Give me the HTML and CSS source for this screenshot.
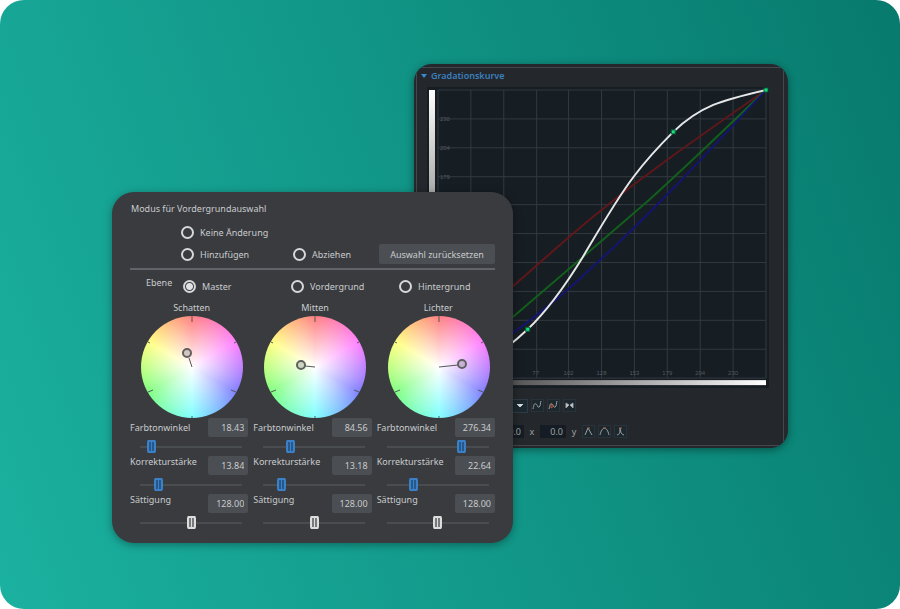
FILE: index.html
```html
<!DOCTYPE html>
<html lang="de">
<head>
  <meta charset="utf-8">
  <title>Farbkorrektur</title>
  <link rel="stylesheet" href="styles.css">
</head>
<body>
  <main class="stage">
    <div class="panels">

      <section class="curve-panel">
        <div class="curve-frame">
          <h2 class="curve-title">Gradationskurve</h2>
          <svg class="curve-plot" viewBox="426 87 343 302">
            <defs>
              <linearGradient id="rampV" x1="0" y1="0" x2="0" y2="1">
                <stop offset="0" stop-color="#fff"/>
                <stop offset="1" stop-color="#111"/>
              </linearGradient>
              <linearGradient id="rampH">
                <stop offset="0" stop-color="#222"/>
                <stop offset="1" stop-color="#fff"/>
              </linearGradient>
            </defs>
            <rect x="426" y="87" width="343" height="302" fill="#161d23"/>
            <rect x="428" y="90" width="6" height="289" fill="url(#rampV)"/>
            <rect x="437" y="381" width="329" height="5" fill="url(#rampH)"/>
            <path class="grid-lines" d="M437 90V379M470 90V379M503 90V379M536 90V379M568 90V379M601 90V379M634 90V379M667 90V379M700 90V379M733 90V379M766 90V379M437 90H766M437 119H766M437 148H766M437 177H766M437 205H766M437 234H766M437 263H766M437 292H766M437 321H766M437 350H766M437 379H766"/>
            <g class="scale">
              <text x="439" y="121">230</text>
              <text x="439" y="150">204</text>
              <text x="439" y="179">179</text>
            </g>
            <g class="scale scale-x">
              <text x="535" y="376">77</text>
              <text x="568" y="376">102</text>
              <text x="601" y="376">128</text>
              <text x="634" y="376">153</text>
              <text x="667" y="376">179</text>
              <text x="700" y="376">204</text>
              <text x="733" y="376">230</text>
            </g>
            <path class="curve red" d="M437 356C480 315 496 301 513 286C560 245 600 208 667 160C700 136 733 113 766 90"/>
            <path class="curve green" d="M437 379L513 317C560 277 600 242 649 200C688 165 727 127 766 90"/>
            <path class="curve blue" d="M437 379C460 370 490 349 513 333C544 311 570 289 600 260C655 210 710 150 766 90"/>
            <path class="curve white" d="M437 379C470 374 495 360 527 330C547 311 566 284 582 258C598 231 617 198 634 176C646 160 660 145 673 132C700 106 722 100 766 90"/>
            <g class="knots">
              <rect x="525" y="328" width="4" height="4"/>
              <rect x="671" y="130" width="4" height="4"/>
              <rect x="764" y="88" width="4" height="4"/>
            </g>
          </svg>

          <div class="curve-tools">
            <select class="channel" aria-label="Kanal"><option></option></select>
            <button class="tool" aria-label="Kurve">
              <svg viewBox="0 0 11 11"><path d="M1 9C2 5 2 3 4 4S5 8 7 7S8 3 9 1"/></svg>
            </button>
            <button class="tool" aria-label="Kurve anpassen">
              <svg viewBox="0 0 11 11"><path d="M1 9C2 5 2 3 4 4S5 8 7 7S8 3 9 1"/><path class="hot" d="M3 4L6 6L3 8Z"/></svg>
            </button>
            <button class="tool" aria-label="Spiegeln">
              <svg viewBox="0 0 11 11"><path class="solid" d="M2 3L5 5L2 8ZM9 3L6 5L9 8Z"/></svg>
            </button>
          </div>
          <div class="curve-tools coords">
            <input class="coord" id="cx" type="text" value="0.0"><label for="cx">x</label>
            <input class="coord" id="cy" type="text" value="0.0"><label for="cy">y</label>
            <button class="tool" aria-label="Ecke">
              <svg viewBox="0 0 11 11"><path d="M2 9L5 2L9 9"/><path class="hot" d="M4 2h3"/></svg>
            </button>
            <button class="tool" aria-label="Glatt">
              <svg viewBox="0 0 11 11"><path d="M1 9C3 0 8 0 10 9"/><path class="hot" d="M4 2h3"/></svg>
            </button>
            <button class="tool" aria-label="Spitze">
              <svg viewBox="0 0 11 11"><path d="M2 9C5 8 5 7 5 2C6 7 6 8 9 9"/><path class="hot" d="M4 2h3"/></svg>
            </button>
          </div>
        </div>
      </section>

      <section class="wheel-panel">
        <h2 class="mode-title">Modus für Vordergrundauswahl</h2>
        <div class="modes">
          <label class="radio keep"><input type="radio" name="mode">Keine Änderung</label>
          <label class="radio"><input type="radio" name="mode">Hinzufügen</label>
          <label class="radio"><input type="radio" name="mode">Abziehen</label>
          <button class="reset">Auswahl zurücksetzen</button>
        </div>
        <div class="layers">
          <span class="layers-title">Ebene</span>
          <label class="radio"><input type="radio" name="layer" checked>Master</label>
          <label class="radio"><input type="radio" name="layer">Vordergrund</label>
          <label class="radio"><input type="radio" name="layer">Hintergrund</label>
        </div>

        <div class="columns">
          <section class="column">
            <h3>Schatten</h3>
            <svg class="wheel" viewBox="-51 -51 102 102">
              <path class="ticks" d="M0 -51V-45M0 51V49M44 -25L42 -24M44 25L39 23M-44 25L-39 23M-44 -25L-42 -24"/>
              <path class="hand" d="M0 0L-3 -9"/>
              <circle class="pin" cx="-5" cy="-14" r="4"/>
            </svg>
            <div class="setting first">
              <label for="s-hue">Farbtonwinkel</label>
              <input class="value" id="s-hue" type="text" value="18.43">
              <input class="slider" type="range" max="360" step="0.01" value="18.43" aria-label="Farbtonwinkel">
            </div>
            <div class="setting">
              <label for="s-strength">Korrekturstärke</label>
              <input class="value" id="s-strength" type="text" value="13.84">
              <input class="slider" type="range" max="100" step="0.01" value="13.84" aria-label="Korrekturstärke">
            </div>
            <div class="setting">
              <label for="s-sat">Sättigung</label>
              <input class="value" id="s-sat" type="text" value="128.00">
              <input class="slider neutral" type="range" max="256" value="128" aria-label="Sättigung">
            </div>
          </section>

          <section class="column">
            <h3>Mitten</h3>
            <svg class="wheel" viewBox="-51 -51 102 102">
              <path class="ticks" d="M0 -51V-45M0 51V49M44 -25L42 -24M44 25L39 23M-44 25L-39 23M-44 -25L-42 -24"/>
              <path class="hand" d="M0 0L-10 -1"/>
              <circle class="pin" cx="-14" cy="-2" r="4"/>
            </svg>
            <div class="setting first">
              <label for="m-hue">Farbtonwinkel</label>
              <input class="value" id="m-hue" type="text" value="84.56">
              <input class="slider" type="range" max="360" step="0.01" value="84.56" aria-label="Farbtonwinkel">
            </div>
            <div class="setting">
              <label for="m-strength">Korrekturstärke</label>
              <input class="value" id="m-strength" type="text" value="13.18">
              <input class="slider" type="range" max="100" step="0.01" value="13.18" aria-label="Korrekturstärke">
            </div>
            <div class="setting">
              <label for="m-sat">Sättigung</label>
              <input class="value" id="m-sat" type="text" value="128.00">
              <input class="slider neutral" type="range" max="256" value="128" aria-label="Sättigung">
            </div>
          </section>

          <section class="column">
            <h3>Lichter</h3>
            <svg class="wheel" viewBox="-51 -51 102 102">
              <path class="ticks" d="M0 -51V-45M0 51V49M44 -25L42 -24M44 25L39 23M-44 25L-39 23M-44 -25L-42 -24"/>
              <path class="hand" d="M0 0L19 -2"/>
              <circle class="pin" cx="23" cy="-3" r="4"/>
            </svg>
            <div class="setting first">
              <label for="l-hue">Farbtonwinkel</label>
              <input class="value" id="l-hue" type="text" value="276.34">
              <input class="slider" type="range" max="360" step="0.01" value="276.34" aria-label="Farbtonwinkel">
            </div>
            <div class="setting">
              <label for="l-strength">Korrekturstärke</label>
              <input class="value" id="l-strength" type="text" value="22.64">
              <input class="slider" type="range" max="100" step="0.01" value="22.64" aria-label="Korrekturstärke">
            </div>
            <div class="setting">
              <label for="l-sat">Sättigung</label>
              <input class="value" id="l-sat" type="text" value="128.00">
              <input class="slider neutral" type="range" max="256" value="128" aria-label="Sättigung">
            </div>
          </section>
        </div>
      </section>

    </div>
  </main>
</body>
</html>
```
FILE: styles.css
```css
* {
  box-sizing: border-box;
}

body {
  margin: 0;
  background-color: white;
  font-family: "Noto Sans", sans-serif;
  font-size: 9px;
  color: #c9cbcd;
}

h2,
h3 {
  margin: 0;
  font-size: 9px;
  font-weight: normal;
}

button,
input,
select {
  margin: 0;
  padding: 0;
  border: none;
  font: inherit;
  color: inherit;
}

.stage {
  min-height: 100vh;
  padding: 64px 112px;
  border-radius: 24px;
  background: linear-gradient(70deg, #1bb1a0, #077a6d);
}

.panels {
  display: grid;
  grid-template-columns: 302fr 99fr 275fr;
  max-width: 676px;
  margin: 0 auto;
}

/* curve panel */

.curve-panel {
  grid-area: 1 / 2 / 2 / 4;
  align-self: start;
  padding: 3px 4px 2px 2px;
  border-radius: 18px;
  background-color: #24272b;
  box-shadow: 0 2px 8px rgba(0, 0, 0, 0.4);
  overflow: hidden;
}

.curve-frame {
  padding: 0 14px 7px 10px;
  border: 1px solid #44484c;
}

.curve-title {
  display: flex;
  align-items: center;
  gap: 4px;
  height: 19px;
  margin-left: -6px;
  padding-bottom: 4px;
  color: #3a80bf;
  font-weight: 600;
}

.curve-title::before {
  content: "";
  border: 3px solid transparent;
  border-top: 4px solid #3a8ad0;
  border-bottom: none;
}

.curve-plot {
  display: block;
  width: 100%;
}

.grid-lines {
  fill: none;
  stroke: #333a40;
}

.scale {
  font-size: 6px;
  font-family: "Liberation Sans", sans-serif;
  fill: #535a60;
}

.scale-x {
  text-anchor: middle;
}

.curve {
  fill: none;
  stroke-width: 2;
}

.red { stroke: #5f1719; }
.green { stroke: #125e1d; }
.blue { stroke: #141570; }
.white { stroke: #e4e6e7; }

.knots {
  fill: #12e07d;
  stroke: #0b5c38;
}

.curve-tools {
  display: flex;
  align-items: center;
  gap: 3px;
  height: 13px;
  margin-top: 11px;
}

.channel {
  appearance: none;
  width: 101px;
  height: 14px;
  background:
    linear-gradient(45deg, transparent 50%, #d5dadd 50%) right 7px center / 4px 4px no-repeat,
    linear-gradient(315deg, transparent 50%, #d5dadd 50%) right 3px center / 4px 4px no-repeat,
    #1c2930;
  border: 1px solid #2e3b43;
}

.tool {
  width: 13px;
  height: 13px;
  background-color: #1c272e;
  border: 1px solid #27323a;
}

.tool svg {
  display: block;
  width: 11px;
  height: 11px;
  fill: none;
  stroke: #9ba1a5;
}

.tool .hot {
  stroke: #b25f48;
}

.tool .solid {
  fill: #cfd3d5;
}

.coords {
  margin-top: 13px;
  padding-left: 71px;
  color: #9da2a5;
}

.coords label {
  width: 10px;
  text-align: center;
}

.coord {
  width: 26px;
  height: 13px;
  padding-right: 3px;
  background-color: #151c23;
  text-align: right;
}

/* wheel panel */

.wheel-panel {
  grid-area: 1 / 1 / 2 / 3;
  margin-top: 128px;
  padding: 10px 18px 11px;
  border-radius: 22px;
  background-color: #393b3f;
  box-shadow: 0 2px 8px rgba(0, 0, 0, 0.35);
}

.mode-title {
  padding-left: 1px;
  line-height: 14px;
}

.modes {
  display: grid;
  grid-template-columns: 112px 1fr 116px;
  row-gap: 2px;
  align-items: center;
  margin-top: 6px;
  padding: 0 0 4px 51px;
  border-bottom: 2px solid #606468;
}

.radio {
  display: flex;
  align-items: center;
  gap: 6px;
  height: 20px;
}

.radio input {
  appearance: none;
  width: 13px;
  height: 13px;
  border: 2px solid #d6d8d9;
  border-radius: 50%;
}

.radio input:checked {
  background: radial-gradient(circle, #e0e2e3 3px, transparent 4px);
}

.keep {
  grid-column: 1 / -1;
}

.reset {
  height: 20px;
  border-radius: 2px;
  background-color: #4b4e52;
}

.layers {
  display: grid;
  grid-template-columns: 37px 108px 108px 1fr;
  align-items: center;
  margin-top: 6px;
  padding-left: 16px;
}

.layers-title {
  padding-bottom: 7px;
}

.columns {
  display: grid;
  grid-template-columns: repeat(3, 1fr);
  gap: 5px;
}

.column h3 {
  padding: 4px 0 0 5px;
  line-height: 16px;
  text-align: center;
}

.wheel {
  display: block;
  width: 102px;
  height: 102px;
  margin-left: 11px;
  border-radius: 50%;
  background:
    radial-gradient(closest-side, white, rgba(255, 255, 255, 0)),
    conic-gradient(#ff8080, #ff80ff, #8080ff, #80ffff, #80ff80, #ffff80, #ff8080);
}

.ticks,
.hand {
  fill: none;
  stroke: #55585a;
}

.pin {
  fill: rgba(150, 150, 150, 0.4);
  stroke: #606060;
  stroke-width: 2;
}

.setting {
  display: grid;
  grid-template-columns: 1fr 40px;
  grid-template-rows: 19px 19px;
}

.setting label {
  line-height: 11px;
}

.first label {
  line-height: 19px;
}

.value {
  width: 40px;
  padding-right: 4px;
  border-radius: 2px;
  background-color: #4b4e52;
  text-align: right;
}

.slider {
  grid-column: 1 / -1;
  appearance: none;
  width: 102px;
  height: 19px;
  margin-left: 10px;
  background: linear-gradient(#4a4d50, #4a4d50) center / 100% 2px no-repeat;
}

/* the transparent side borders keep the knob clear of the track ends */
.slider::-webkit-slider-thumb {
  appearance: none;
  box-sizing: border-box;
  width: 13px;
  height: 13px;
  border: solid transparent;
  border-width: 0 2px;
  border-radius: 3px;
  background:
    linear-gradient(90deg, #3c81c8 2px, #26588c 2px 4px, #3c81c8 4px 5px, #26588c 5px 7px, #3c81c8 7px) center / 9px 9px no-repeat padding-box,
    #3c81c8 padding-box;
}

.neutral::-webkit-slider-thumb {
  background:
    linear-gradient(90deg, #dcdddd 2px, #77797b 2px 4px, #dcdddd 4px 5px, #77797b 5px 7px, #dcdddd 7px) center / 9px 9px no-repeat padding-box,
    #dcdddd padding-box;
}
```
